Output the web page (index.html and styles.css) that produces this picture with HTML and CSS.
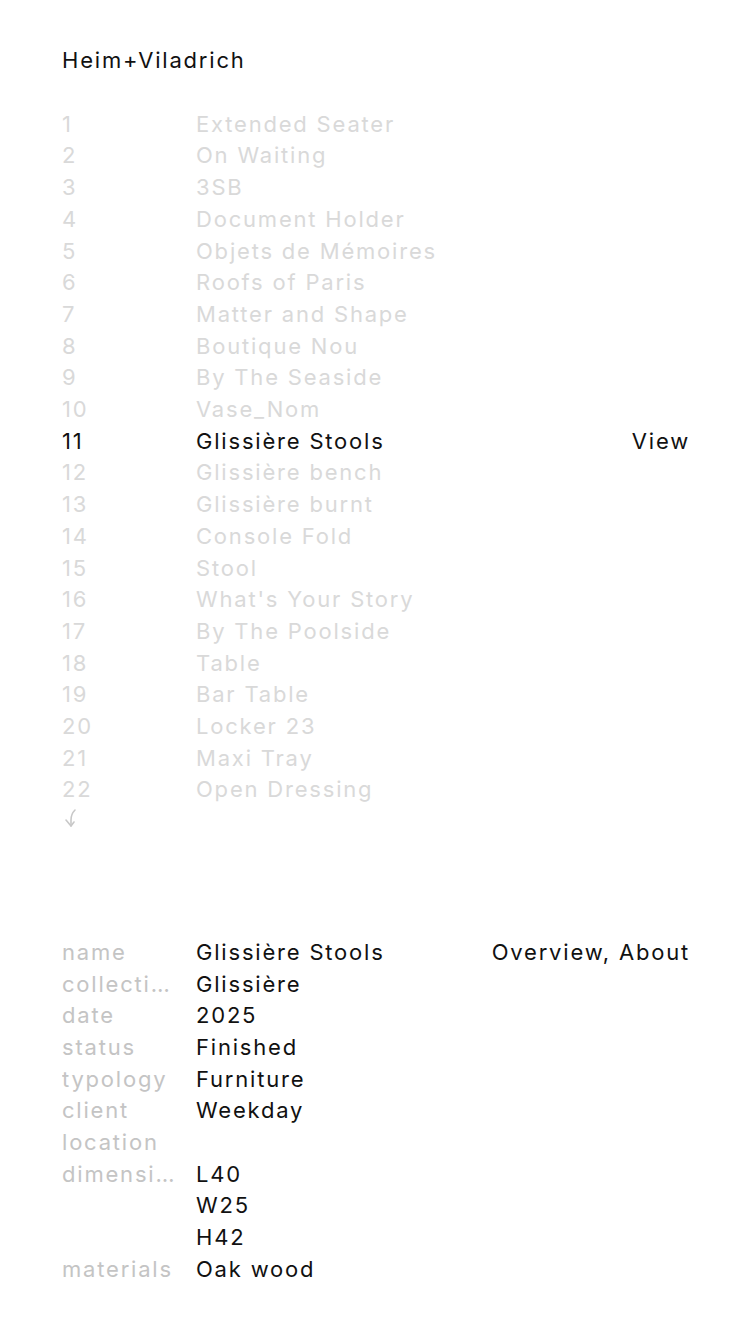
FILE: index.html
```html
<!DOCTYPE html>
<html>
<head>
<meta charset="utf-8">
<link rel="stylesheet" href="styles.css">
</head>
<body>
<div class="page">
  <header class="brand">Heim+Viladrich</header>
  <ol class="list">
    <li class="row"><span class="num">1</span><span class="title">Extended Seater</span></li>
    <li class="row"><span class="num">2</span><span class="title">On Waiting</span></li>
    <li class="row"><span class="num">3</span><span class="title">3SB</span></li>
    <li class="row"><span class="num">4</span><span class="title">Document Holder</span></li>
    <li class="row"><span class="num">5</span><span class="title">Objets de Mémoires</span></li>
    <li class="row"><span class="num">6</span><span class="title">Roofs of Paris</span></li>
    <li class="row"><span class="num">7</span><span class="title">Matter and Shape</span></li>
    <li class="row"><span class="num">8</span><span class="title">Boutique Nou</span></li>
    <li class="row"><span class="num">9</span><span class="title">By The Seaside</span></li>
    <li class="row"><span class="num">10</span><span class="title">Vase_Nom</span></li>
    <li class="row active"><span class="num">11</span><span class="title">Glissière Stools</span><span class="view">View</span></li>
    <li class="row"><span class="num">12</span><span class="title">Glissière bench</span></li>
    <li class="row"><span class="num">13</span><span class="title">Glissière burnt</span></li>
    <li class="row"><span class="num">14</span><span class="title">Console Fold</span></li>
    <li class="row"><span class="num">15</span><span class="title">Stool</span></li>
    <li class="row"><span class="num">16</span><span class="title">What's Your Story</span></li>
    <li class="row"><span class="num">17</span><span class="title">By The Poolside</span></li>
    <li class="row"><span class="num">18</span><span class="title">Table</span></li>
    <li class="row"><span class="num">19</span><span class="title">Bar Table</span></li>
    <li class="row"><span class="num">20</span><span class="title">Locker 23</span></li>
    <li class="row"><span class="num">21</span><span class="title">Maxi Tray</span></li>
    <li class="row"><span class="num">22</span><span class="title">Open Dressing</span></li>
  </ol>
  <div class="more">
    <svg width="24" height="24" viewBox="0 0 24 24" fill="none" stroke="#c8c8c8" stroke-width="1.6" stroke-linecap="round" stroke-linejoin="round">
      <path d="M15 4 C12 7 11 10 11 14 V20"/>
      <path d="M6 14 L11 20 L14 16"/>
    </svg>
  </div>
  <section class="details">
    <div class="drow"><span class="label">name</span><span class="value">Glissière Stools</span><span class="links">Overview, About</span></div>
    <div class="drow"><span class="label">collection</span><span class="value">Glissière</span></div>
    <div class="drow"><span class="label">date</span><span class="value">2025</span></div>
    <div class="drow"><span class="label">status</span><span class="value">Finished</span></div>
    <div class="drow"><span class="label">typology</span><span class="value">Furniture</span></div>
    <div class="drow"><span class="label">client</span><span class="value">Weekday</span></div>
    <div class="drow"><span class="label">location</span><span class="value"></span></div>
    <div class="drow"><span class="label">dimensions</span><span class="value">L40<br>W25<br>H42</span></div>
    <div class="drow"><span class="label">materials</span><span class="value">Oak wood</span></div>
  </section>
</div>
</body>
</html>
```
FILE: styles.css
```css
html, body {
  margin: 0;
  padding: 0;
  background: #ffffff;
}
body {
  font-family: Inter, "Liberation Sans", sans-serif;
  font-size: 22px;
  line-height: 31.7px;
  letter-spacing: 1.8px;
  color: #111111;
}
.page {
  padding: 45px 60px 40px 62px;
}
.brand {
  color: #111111;
  margin-bottom: 32px;
}
.list {
  list-style: none;
  margin: 0;
  padding: 0;
}
.row {
  display: flex;
  color: #d9d9d9;
}
.row .num {
  width: 134px;
  flex: none;
}
.row .title {
  flex: 1;
}
.row.active {
  color: #111111;
}
.more {
  height: 31.7px;
  display: flex;
  align-items: center;
}
.more svg {
  display: block;
  margin-left: -2px;
  margin-top: -8px;
}
.details {
  margin-top: 99px;
}
.drow {
  display: flex;
}
.label {
  width: 113px;
  margin-right: 21px;
  flex: none;
  color: #c4c4c4;
  white-space: nowrap;
  overflow: hidden;
  text-overflow: ellipsis;
}
.value {
  flex: 1;
  color: #111111;
}
.links {
  color: #111111;
}
```
